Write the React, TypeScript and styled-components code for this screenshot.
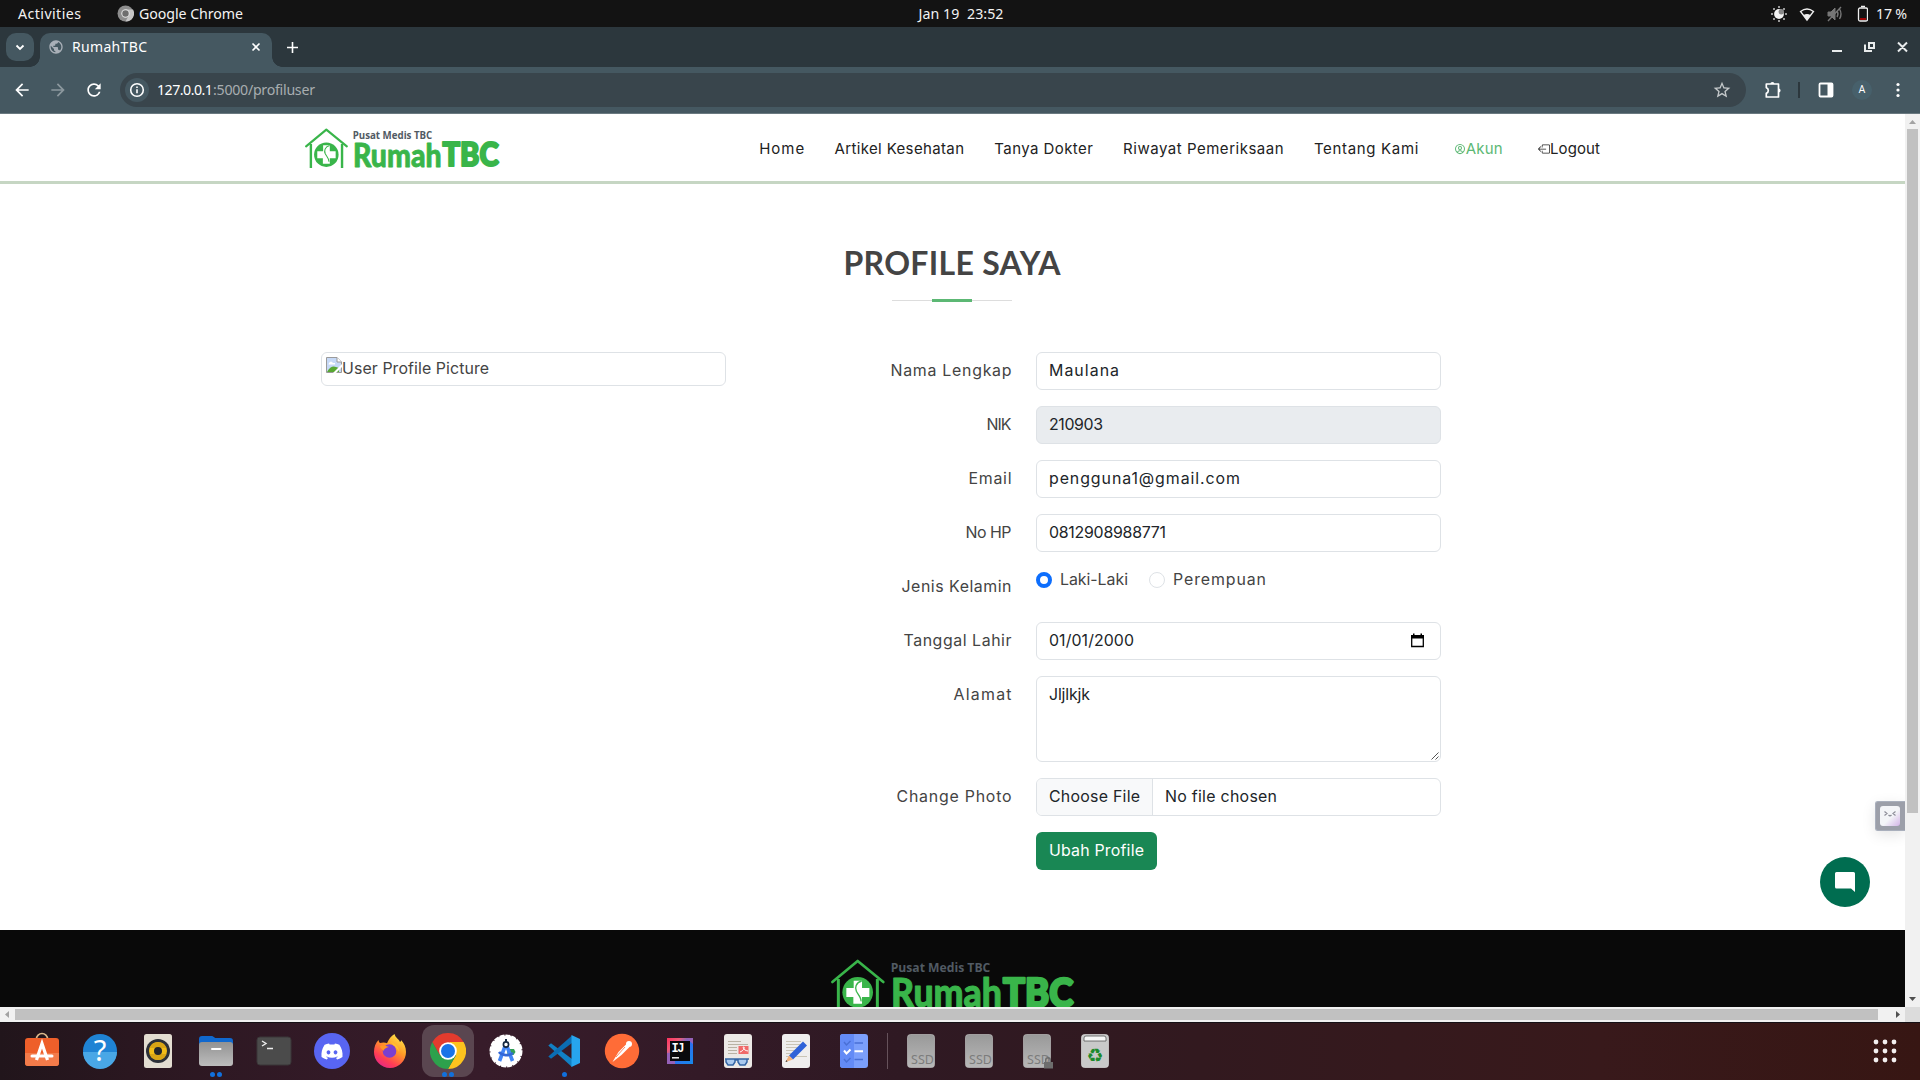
import React, { useLayoutEffect, useRef, useState } from "react";
import styled, { createGlobalStyle } from "styled-components";
import { FaDiscord } from "react-icons/fa";
import { BiUserCircle } from "react-icons/bi";
import { MdOutlineStarBorder, MdRefresh, MdArrowBack, MdArrowForward, MdPublic } from "react-icons/md";
import { BsBoxArrowLeft } from "react-icons/bs";

const Global = createGlobalStyle`
  * { box-sizing: border-box; }
  html, body { margin: 0; padding: 0; overflow: hidden; background: #fff; }
  svg { display: block; flex: none; }
`;

const ui = `"Noto Sans", "Open Sans", sans-serif`;
const body = `Inter, "Open Sans", sans-serif`;

/* Text tracked so that it fills a given width. */
const Tracked = styled.span<{ $w: number }>`
  display: inline-block;
  width: ${(p) => p.$w}px;
  white-space: pre;
  text-align: left;
  flex: none;
`;

function Fit({ w, children }: { w: number; children: string }) {
  const ref = useRef<HTMLSpanElement>(null);
  const [ls, setLs] = useState(0);
  useLayoutEffect(() => {
    const el = ref.current;
    if (!el) return;
    const natural = el.getBoundingClientRect().width;
    setLs((w - natural) / Math.max(1, children.length - 1));
  }, [w, children]);
  return (
    <Tracked $w={w}>
      <span ref={ref} style={{ letterSpacing: ls }}>{children}</span>
    </Tracked>
  );
}

const Screen = styled.div`
  width: 1920px;
  height: 1080px;
  display: flex;
  flex-direction: column;
  overflow: hidden;
  background: #fff;
`;

/* ---------- system bar ---------- */
const SystemBar = styled.header`
  height: 27px;
  flex: none;
  display: grid;
  grid-template-columns: 1fr auto 1fr;
  align-items: center;
  background: #131313;
  color: #f2f2f2;
  font: 14.2px/27px ${ui};
  padding: 0 13px 0 18px;
`;
const SystemSide = styled.div<{ $end?: boolean; $gap: number }>`
  display: flex;
  align-items: center;
  gap: ${(p) => p.$gap}px;
  justify-content: ${(p) => (p.$end ? "flex-end" : "flex-start")};
`;
const Clock = styled.div`
  padding-right: 3px;
`;
const AppMenu = styled.div`
  display: flex;
  align-items: center;
  gap: 5px;
`;

/* ---------- browser chrome ---------- */
const TabStrip = styled.div`
  height: 40px;
  flex: none;
  display: flex;
  align-items: flex-start;
  background: #2c373d;
  padding: 6px 12px 0 6px;
`;
const TabSearch = styled.div`
  width: 28px;
  height: 28px;
  border-radius: 10px;
  background: #455861;
  display: grid;
  place-items: center;
  margin-right: 6px;
`;
const Tab = styled.div`
  position: relative;
  width: 232px;
  height: 34px;
  border-radius: 10px 10px 0 0;
  background: #455861;
  color: #fff;
  display: flex;
  align-items: center;
  padding: 0 11px 6px 8px;
  font: 14px/28px ${ui};
  &::before,
  &::after {
    content: "";
    position: absolute;
    bottom: 0;
    width: 10px;
    height: 10px;
  }
  &::before {
    left: -10px;
    background: radial-gradient(circle at 0 0, transparent 9.5px, #455861 10px);
  }
  &::after {
    right: -10px;
    background: radial-gradient(circle at 100% 0, transparent 9.5px, #455861 10px);
  }
`;
const TabTitle = styled.div`
  flex: 1;
  padding-left: 8px;
`;
const NewTab = styled.div`
  height: 28px;
  display: grid;
  place-items: center;
  margin-left: 12px;
  width: 16px;
`;
const WindowButtons = styled.div`
  margin-left: auto;
  height: 28px;
`;
const Toolbar = styled.div`
  height: 47px;
  flex: none;
  display: flex;
  align-items: center;
  background: #455861;
  border-bottom: 1px solid #6a7980;
  padding: 0 12px 0 12px;
  color: #fff;
`;
const NavButtons = styled.div`
  display: flex;
  gap: 16px;
  width: 108px;
`;
const AddressBar = styled.div`
  width: 1626px;
  height: 34px;
  border-radius: 17px;
  background: #39454c;
  display: flex;
  align-items: center;
  padding: 0 14px 0 5px;
  font: 14.2px/34px ${ui};
`;
const InfoChip = styled.div`
  width: 24px;
  height: 24px;
  border-radius: 50%;
  background: #455861;
  display: grid;
  place-items: center;
  margin-right: 8px;
`;
const Path = styled.span`
  flex: 1;
  color: #a8adb0;
`;
const ToolbarActions = styled.div`
  display: flex;
  align-items: center;
  padding-left: 17px;
`;
const ToolbarRule = styled.div`
  width: 2px;
  height: 16px;
  background: #2c373d;
  margin: 0 18px 0 15px;
`;
const Avatar = styled.div`
  width: 20px;
  height: 20px;
  border-radius: 50%;
  background: #47606b;
  display: grid;
  place-items: center;
  font: 400 10.5px/20px Roboto, sans-serif;
  margin: 0 24px 0 18px;
`;

/* ---------- page frame ---------- */
const Frame = styled.div`
  height: 908px;
  flex: none;
  display: grid;
  grid-template-columns: 1905px 15px;
  grid-template-rows: 893px 15px;
`;
const Viewport = styled.main`
  position: relative;
  overflow: hidden;
  background: #fff;
  font: 15.9px/24px ${body};
  color: #444;
`;
const VScroll = styled.div`
  background: #f1f1f1;
  display: flex;
  flex-direction: column;
  align-items: center;
  justify-content: space-between;
`;
const VThumb = styled.div`
  width: 11px;
  height: 684px;
  background: #c1c1c1;
  margin-bottom: auto;
`;
const HScroll = styled.div`
  background: #f1f1f1;
  display: flex;
  align-items: center;
`;
const HThumb = styled.div`
  width: 1863px;
  height: 11px;
  background: #c1c1c1;
  margin-right: auto;
`;
const Corner = styled.div`
  background: #dcdcdc;
`;

/* ---------- site ---------- */
const SiteHeader = styled.div`
  height: 70px;
  border-bottom: 3px solid #c6d6c3;
  display: flex;
  padding: 0 305px;
`;
const BrandSlot = styled.div`
  width: 455px;
  padding-top: 14px;
`;
const SiteNav = styled.nav`
  display: flex;
  align-items: center;
  height: 69px;
  gap: 30.3px;
  color: #222;
  font-size: 15px;
`;
const NavItem = styled.div<{ $active?: boolean; $icon?: boolean }>`
  display: flex;
  align-items: center;
  color: ${(p) => (p.$active ? "#5cb874" : "#222")};
  margin-left: ${(p) => (p.$icon ? "5px" : "0")};
`;
const SectionTitle = styled.section`
  display: flex;
  flex-direction: column;
  align-items: center;
  height: 168px;
  padding: 60px 1px 0 0;
`;
const Heading = styled.h2`
  margin: 0;
  font: 700 32px/38px Lato, sans-serif;
  color: #444;
`;
const Underline = styled.div`
  width: 120px;
  height: 3px;
  margin-top: 17px;
  display: flex;
  align-items: center;
  justify-content: center;
  background: linear-gradient(#ddd, #ddd) 0 1px / 120px 1px no-repeat;
`;
const Accent = styled.div`
  width: 40px;
  height: 3px;
  background: #5cb874;
`;
const Content = styled.section`
  display: flex;
  height: 578px;
  padding-left: 321px;
`;
const PictureBox = styled.div`
  width: 405px;
  height: 34px;
  border: 1px solid #dee2e6;
  border-radius: 6px;
  padding: 4px;
  display: flex;
  line-height: 24px;
`;
const Form = styled.form`
  width: 715px;
  display: flex;
  flex-direction: column;
  gap: 16px;
`;
const Row = styled.div`
  display: grid;
  grid-template-columns: 286px 405px;
  column-gap: 24px;
`;
const Label = styled.label`
  text-align: right;
  padding: 7px 0.5px 0 0;
  line-height: 24px;
`;
const Field = styled.div<{ $disabled?: boolean; $h?: number }>`
  height: ${(p) => p.$h ?? 38}px;
  border: 1px solid #dee2e6;
  border-radius: 6px;
  background: ${(p) => (p.$disabled ? "#e9ecef" : "#fff")};
  color: #212529;
  padding: 6px 15px 0 12px;
  display: flex;
  justify-content: space-between;
  overflow: hidden;
`;
const FileField = styled(Field)`
  padding: 0;
  justify-content: flex-start;
`;
const FileButton = styled.div`
  width: 116px;
  height: 36px;
  padding: 6px 0 0 12px;
  background: #f8f9fa;
  border-right: 1px solid #dee2e6;
`;
const FileName = styled.div`
  padding: 6px 0 0 12px;
`;
const Grip = styled.div`
  align-self: flex-end;
  margin: 0 -14px 1px 0;
`;
const Calendar = styled.div`
  padding-top: 4px;
`;
const RadioGroup = styled.div`
  height: 38px;
  display: flex;
`;
const RadioItem = styled.div`
  display: flex;
  gap: 8px;
  height: 24px;
  align-items: center;
  margin-right: 21px;
`;
const Radio = styled.div<{ $on?: boolean }>`
  width: 16px;
  height: 16px;
  border-radius: 50%;
  border: ${(p) => (p.$on ? "4.5px solid #0d6efd" : "1px solid #dee2e6")};
  background: #fff;
`;
const Submit = styled.div`
  width: 121px;
  height: 38px;
  border-radius: 6px;
  background: #198754;
  color: #fff;
  padding: 7px 0 0 13px;
`;
const Footer = styled.footer`
  height: 77px;
  background: #090909;
  padding: 29px 0 0 831px;
  overflow: hidden;
`;
const ChatButton = styled.div`
  position: absolute;
  left: 1820px;
  top: 743px;
  width: 50px;
  height: 50px;
  border-radius: 50%;
  background: #006d50;
  display: grid;
  place-items: center;
`;
const SideWidget = styled.div`
  position: absolute;
  left: 1875px;
  top: 687px;
  width: 30px;
  height: 30px;
  border: 1px solid #a9afbc;
  border-right: 0;
  border-radius: 3px 0 0 3px;
  background: #9c9fa9;
  box-shadow: 0 4px 14px rgba(0, 0, 0, 0.1);
  padding: 4px;
`;
const SideFace = styled.div`
  width: 20px;
  height: 20px;
  border-radius: 3px;
  background: linear-gradient(135deg, #f4f5f8 55%, #d3b4e6);
`;

/* ---------- dock ---------- */
const Dock = styled.div`
  height: 58px;
  flex: none;
  border-top: 1px solid #151015;
  display: flex;
  padding: 0 6px 0 13px;
  background: linear-gradient(90deg, #21151b 0, #2a1720 130px, #331a27 330px, #371c2a 480px, #331a27 700px, #2f1923 900px, #32191f 1200px, #38191b 1600px, #371613 1920px);
`;
const DockItem = styled.div`
  width: 58px;
  height: 57px;
  display: flex;
  justify-content: center;
  padding-top: 2px;
  position: relative;
`;
const DockTile = styled.div<{ $active?: boolean }>`
  width: 52px;
  height: 52px;
  border-radius: 12px;
  background: ${(p) => (p.$active ? "#5a4650" : "transparent")};
  display: grid;
  place-items: center;
`;
const Running = styled.div`
  position: absolute;
  bottom: 3px;
  left: 0;
  width: 58px;
  display: flex;
  justify-content: center;
  gap: 2px;
`;
const Dot = styled.i`
  width: 5px;
  height: 5px;
  border-radius: 50%;
  background: #1170dd;
`;
const DockRule = styled.div`
  width: 1px;
  height: 36px;
  margin: 10px 4px 0;
  background: #66525b;
`;
const AppGrid = styled.div`
  margin-left: auto;
  width: 58px;
  height: 56px;
  display: grid;
  place-items: center;
`;

const LogoSvg = styled.svg`
  overflow: visible;
`;

/* House logo with wordmark; both the header and the footer scale it by width. */
function Logo({ width }: { width: number }) {
  const g = "#39b54a";
  return (
    <LogoSvg width={width} height={(width * 155) / 732} viewBox="152 118 732 155">
      <g fill="none" stroke={g} strokeLinecap="round" strokeLinejoin="round">
        <path d="M156 187 232 124 309 187" strokeWidth="8" />
        <path d="M174 178V268M291 178V268" strokeWidth="9" strokeLinecap="butt" />
      </g>
      <circle cx="232" cy="218" r="46" fill={g} />
      <path d="M220 183h25v22h22v27h-22v20h-26v-20h-21v-27h22z" fill="#fff" />
      <path d="M244 184c-18 5-21 20-16 31 5 10 15 18 14 30" fill="none" stroke={g} strokeWidth="4" />
      <text x="331" y="158" fontFamily='"Open Sans", sans-serif' fontWeight="700" fontSize="39" fill="#515a63" textLength="299" lengthAdjust="spacingAndGlyphs">Pusat Medis TBC</text>
      <g fill={g} stroke={g} strokeLinejoin="round" fontFamily="Lato, sans-serif" fontWeight="900">
        <text x="332" y="263" fontSize="122" strokeWidth="3" textLength="333" lengthAdjust="spacingAndGlyphs">Rumah</text>
        <text x="668" y="262" fontSize="122" strokeWidth="8" textLength="211" lengthAdjust="spacingAndGlyphs">TBC</text>
      </g>
    </LogoSvg>
  );
}

const Store = () => (
  <svg width="36" height="38" viewBox="0 0 36 38">
    <path d="M12.500 9V7a5.500 5.500 0 0 1 11 0v2" fill="none" stroke="#dcb98c" strokeWidth="1.600" />
    <rect x="1" y="6" width="34" height="28" rx="3" fill="#ee5f2a" />
    <path d="M1 21h34v10a3 3 0 0 1-3 3H4a3 3 0 0 1-3-3z" fill="#f37b4a" />
    <path d="M12.500 28 18 11.500 23.500 28" fill="none" stroke="#fff" strokeWidth="3.200" />
    <path d="M8 24h20" stroke="#fff" strokeWidth="3" strokeLinecap="round" />
  </svg>
);
const Help = () => (
  <svg width="36" height="36" viewBox="0 0 36 36">
    <circle cx="18" cy="18" r="17" fill="#1f83d4" />
    <path d="M1 19a17 17 0 0 0 34 0z" fill="#49a7e6" />
    <text x="18" y="28" textAnchor="middle" fontFamily='"Noto Sans"' fontSize="29" fill="#fff">?</text>
  </svg>
);
const Music = () => (
  <svg width="36" height="36" viewBox="0 0 36 36">
    <rect x="4" y="1" width="28" height="34" rx="2.500" fill="#e3ddd1" />
    <circle cx="18" cy="18" r="12" fill="#2c3038" />
    <circle cx="18" cy="18" r="9" fill="#f2bd18" />
    <path d="M9.500 15a9 9 0 0 1 17 0zM9.500 21a9 9 0 0 0 17 0z" fill="#d9a515" />
    <circle cx="18" cy="18" r="4" fill="#23262c" />
  </svg>
);
const Files = () => (
  <svg width="36" height="36" viewBox="0 0 36 36">
    <path d="M1 6a3 3 0 0 1 3-3h9c3 0 3 2 5 2h14a3 3 0 0 1 3 3v8H1z" fill="#1068ce" />
    <defs><linearGradient id="fo" x2="0" y2="1"><stop stopColor="#929292" /><stop offset="1" stopColor="#bdbdbd" /></linearGradient></defs>
    <path d="M1 12a3 3 0 0 1 3-3h28a3 3 0 0 1 3 3v18a3 3 0 0 1-3 3H4a3 3 0 0 1-3-3z" fill="url(#fo)" />
    <path d="M14 16h8.500" stroke="#fff" strokeWidth="2" strokeLinecap="round" />
  </svg>
);
const Term = () => (
  <svg width="36" height="36" viewBox="0 0 36 36">
    <rect x="1" y="4" width="34" height="28" rx="3" fill="#4b4b4b" stroke="#3a3638" />
    <path d="m6 8 4 2.500L6 13M11 15.500h6" fill="none" stroke="#eee" strokeWidth="1.400" />
  </svg>
);
const Discord = () => (
  <svg width="36" height="36" viewBox="0 0 36 36">
    <circle cx="18" cy="18" r="18" fill="#5865f2" />
    <FaDiscord x="6.500" y="7" size="23" color="#fff" />
  </svg>
);
const Firefox = () => (
  <svg width="36" height="36" viewBox="0 0 36 36">
    <defs>
      <linearGradient id="fx" x1=".8" y1="0" x2=".2" y2="1"><stop stopColor="#ffe94a" /><stop offset=".4" stopColor="#ff9a26" /><stop offset=".75" stopColor="#ff3d55" /><stop offset="1" stopColor="#e2258d" /></linearGradient>
    </defs>
    <path d="M22.500 1c1 4 4 4.500 5.500 8 1-.5 1.200-1.500 1-2 3 3 5 7 5 12A16 16 0 0 1 2 19c0-5 1.500-9 4.500-12 .2 1.500.8 2.500 1.500 3 2.500-.8 5-.8 7 .2C17 6 19 3 22.500 1z" fill="url(#fx)" />
    <circle cx="17.500" cy="18" r="6.800" fill="#7b3fd0" />
    <path d="M8 13c4-1 6 0 9 1-3 .5-5 2-5.500 4-1-2-3-2-3.500-5z" fill="#ff9527" />
    <path d="M19 9c5 2 8 5 8 10-2-5-5-5-8-10z" fill="#ffbf33" />
  </svg>
);
const Chrome = () => (
  <svg width="36" height="36" viewBox="0 0 36 36">
    <path d="M18 18 2.410 9A18 18 0 0 1 33.590 9z" fill="#e33b2e" />
    <path d="M18 9H33.590A18 18 0 0 1 18 36L25.800 22.500z" fill="#fcc31e" />
    <path d="M2.410 9A18 18 0 0 0 18 36L25.800 22.500 18 18 10.200 22.500z" fill="#2da14c" />
    <path d="M2.410 9H20l-8 12-1.800 1.500z" fill="#e33b2e" />
    <circle cx="18" cy="18" r="8.800" fill="#fff" />
    <circle cx="18" cy="18" r="7" fill="#1a73e8" />
  </svg>
);
const Studio = () => (
  <svg width="36" height="36" viewBox="0 0 36 36">
    <circle cx="18" cy="18" r="15.500" fill="#fff" stroke="#fff" strokeWidth="2" strokeDasharray="5 1" />
    <path d="M19 16h7l1.500 3-2 3h-6z" fill="#34a055" />
    <path d="m17.500 12-6 16M18.500 12l6 16" stroke="#4285f4" strokeWidth="3.600" />
    <path d="M11 19c3 4 10 4 14 1" fill="none" stroke="#3367d6" strokeWidth="2.600" />
    <circle cx="18" cy="11.500" r="2.600" fill="#fff" stroke="#152840" strokeWidth="1.700" />
    <path d="M18 6v3" stroke="#152840" strokeWidth="2" />
  </svg>
);
const Code = () => (
  <svg width="36" height="36" viewBox="0 0 36 36">
    <path d="M2.300 12.500 5 10.300 26 26v8z" fill="#1180c4" />
    <path d="M2.300 23.500 5 25.700 26 10V2.500z" fill="#0b6db3" />
    <path d="M25.500 2 34 6v24l-8.500 4z" fill="#27a5ee" />
  </svg>
);
const Postman = () => (
  <svg width="36" height="36" viewBox="0 0 36 36">
    <circle cx="18" cy="18" r="17.200" fill="#ff6c37" />
    <path d="m22.500 11 3 3-8 8-9 7 6-10z" fill="#fff" />
    <path d="M24 17.500 15 27M21 14l-9 10" stroke="#ff6c37" strokeWidth=".8" />
    <circle cx="25" cy="11" r="3" fill="#fff" />
  </svg>
);
const Idea = () => (
  <svg width="36" height="36" viewBox="0 0 36 36">
    <defs><linearGradient id="ij" y2="1"><stop stopColor="#fe315d" /><stop offset=".25" stopColor="#f05a78" /><stop offset=".55" stopColor="#2d6ff0" /><stop offset="1" stopColor="#1689e8" /></linearGradient></defs>
    <path d="M5 5h26v26H5z" fill="url(#ij)" />
    <path d="M5 20h8v11H5zM24 5h7v6z" fill="#9561b8" />
    <path d="M8 8h20v20H8z" fill="#0a0a0c" />
    <text x="9.500" y="19" fontFamily='"Liberation Mono"' fontWeight="700" fontSize="12" fill="#fff" textLength="13">IJ</text>
    <path d="M10 24.800h7" stroke="#fff" strokeWidth="1.400" />
  </svg>
);
const Reader = () => (
  <svg width="36" height="36" viewBox="0 0 36 36">
    <rect x="4" y="1" width="28" height="34" rx="3" fill="#ece9e6" />
    <path d="M8 8.500h13M8 11.500h20M8 14.500h9M8 17.500h9M8 20.500h9" stroke="#b9b2a4" strokeWidth="1.200" />
    <rect x="18.500" y="13" width="10" height="8" fill="#f06a6a" />
    <path d="M20 19c3-1 5-4 4-5s-2 3 4 4" fill="none" stroke="#fff" />
    <g fill="#a9c9ee" stroke="#3465a4" strokeWidth="1.500"><path d="M6 26h9v3l-2 3H8l-2-3zM18 26h9v3l-2 3h-5l-2-3zM15 27h3M5 26h24" /></g>
  </svg>
);
const Editor = () => (
  <svg width="36" height="36" viewBox="0 0 36 36">
    <rect x="4" y="1" width="28" height="34" rx="3" fill="#efeeee" />
    <path d="M8 8.500h15M8 11.500h15M8 14.500h13M8 17.500h10M8 20.500h9M8 23.500h21" stroke="#c9c4b6" strokeWidth="1.200" />
    <path d="m25 8.500 4 4L15 26.500l-4-4z" fill="#2f62d8" />
    <path d="m11 22.500 4 4L7.500 29z" fill="#f3b27c" />
    <path d="m8.500 27-1 2 2-.6z" fill="#333" />
  </svg>
);
const Tasks = () => (
  <svg width="36" height="36" viewBox="0 0 36 36">
    <rect x="4" y="1" width="28" height="34" rx="3" fill="#7b9ffb" />
    <path d="M7 1h11v34H7a3 3 0 0 1-3-3V4a3 3 0 0 1 3-3z" fill="#638bf6" />
    <path d="m8 9 2.500 3 4-4M8 26l2.500 3 4-4M18.500 10h8.500M18.500 26.500h8.500" fill="none" stroke="#4a70d6" strokeWidth="1.500" />
    <path d="m8 17.500 2.500 3 4-4M18.500 18.300h8.500" fill="none" stroke="#fff" strokeWidth="2" />
  </svg>
);
const Ssd = ({ locked }: { locked?: boolean }) => (
  <svg width="36" height="36" viewBox="0 0 36 36">
    <defs><linearGradient id="sd" x2="0" y2="1"><stop stopColor="#999" /><stop offset="1" stopColor="#b8b8b8" /></linearGradient></defs>
    <rect x="4.500" y="1.500" width="27" height="33" rx="3" fill="url(#sd)" stroke="#bcbcbc" strokeWidth=".7" />
    <text x="8" y="31" fontFamily='"Noto Sans"' fontSize="12.500" fill="#7c7c7c" textLength="23">SSD</text>
    {locked && <path d="M26 29v-2a3 3 0 0 1 6 0v2h2v6.500h-9V29zM27.500 29h3v-2a1.500 1.500 0 0 0-3 0z" fill="#6d6d6d" fillRule="evenodd" />}
  </svg>
);
const Trash = () => (
  <svg width="36" height="36" viewBox="0 0 36 36">
    <rect x="4.500" y="1.500" width="27" height="33" rx="3" fill="#c9c9c9" stroke="#ddd" strokeWidth=".7" />
    <path d="M7 8V5q0-2 2-2h18q2 0 2 2v3z" fill="#f7f7f7" stroke="#555" strokeWidth=".8" />
    <text x="18" y="28.500" textAnchor="middle" fontFamily='"DejaVu Sans"' fontSize="19" fill="#1d8a2c">♻</text>
  </svg>
);

const dock: { icon: React.ReactNode; dots?: number; active?: boolean }[] = [
  { icon: <Store /> },
  { icon: <Help /> },
  { icon: <Music /> },
  { icon: <Files />, dots: 2 },
  { icon: <Term /> },
  { icon: <Discord /> },
  { icon: <Firefox /> },
  { icon: <Chrome />, dots: 2, active: true },
  { icon: <Studio /> },
  { icon: <Code />, dots: 1 },
  { icon: <Postman /> },
  { icon: <Idea /> },
  { icon: <Reader /> },
  { icon: <Editor /> },
  { icon: <Tasks /> },
];
const drives: React.ReactNode[] = [<Ssd />, <Ssd />, <Ssd locked />, <Trash />];

const nav: [string, number][] = [
  ["Home", 45],
  ["Artikel Kesehatan", 129.5],
  ["Tanya Dokter", 98.5],
  ["Riwayat Pemeriksaan", 160.5],
  ["Tentang Kami", 104.5],
];

function TextRow({ label, lw, value, vw, disabled }: { label: string; lw: number; value: string; vw: number; disabled?: boolean }) {
  return (
    <Row>
      <Label><Fit w={lw}>{label}</Fit></Label>
      <Field $disabled={disabled}><Fit w={vw}>{value}</Fit></Field>
    </Row>
  );
}

export default function App() {
  return (
    <Screen>
      <Global />
      <SystemBar>
        <SystemSide $gap={36}>
          <Fit w={63}>Activities</Fit>
          <AppMenu>
            <svg width="17" height="17" viewBox="0 0 17 17">
              <circle cx="8.500" cy="8.500" r="8" fill="#8d8d8d" />
              <path d="M8.500 4.500H16A8 8 0 0 1 8.500 16.500L12 10z" fill="#c6c6c6" />
              <circle cx="8.500" cy="8.500" r="4.200" fill="#e5e5e5" />
              <circle cx="8.500" cy="8.500" r="3.200" fill="#6e6e6e" />
            </svg>
            <Fit w={104}>Google Chrome</Fit>
          </AppMenu>
        </SystemSide>
        <Clock><Fit w={85}>Jan 19  23:52</Fit></Clock>
        <SystemSide $end $gap={8}>
          <svg width="97" height="18" viewBox="0 0 97 18">
            <g fill="#999"><path d="M7 1h2v2H7zM7 15h2v2H7zM0 8h2v2H0zM14 8h2v2h-2zM2 3h2v2H2zM12 3h2v2h-2zM2 13h2v2H2zM12 13h2v2h-2z" /></g>
            <circle cx="8" cy="9" r="4.900" fill="#f2f2f2" />
            <circle cx="10.300" cy="6.800" r="2.700" fill="#888" />
            <path d="M29.500 6.500q6.500-5 13 0L36 15z" fill="none" stroke="#eee" strokeWidth="1.400" />
            <path d="M32.500 10q3.500-2 7 0L36 15z" fill="#eee" />
            <g fill="#777" stroke="#777"><path d="M57 7h3l4-4v12l-4-4h-3z" /><path d="M57 16 70 2M66 6q2 3 0 6M68.500 4q3 5 0 10" fill="none" strokeWidth="1.400" /></g>
            <rect x="87.500" y="3" width="9" height="13" rx="1.500" fill="none" stroke="#eee" strokeWidth="1.300" />
            <path d="M90 1.500h4" stroke="#eee" strokeWidth="1.500" />
            <path d="M89 14h6" stroke="#c00" strokeWidth="1.500" />
          </svg>
          <Fit w={31}>17 %</Fit>
        </SystemSide>
      </SystemBar>

      <TabStrip>
        <TabSearch>
          <svg width="10" height="7" viewBox="0 0 10 7"><path d="m1.500 1.500 3.500 3.500L8.500 1.500" fill="none" stroke="#fff" strokeWidth="1.800" /></svg>
        </TabSearch>
        <Tab>
          <MdPublic size={16} color="#a9b0b8" />
          <TabTitle><Fit w={75}>RumahTBC</Fit></TabTitle>
          <svg width="10" height="10" viewBox="0 0 10 10"><path d="m1.500 1.500 7 7M8.500 1.500l-7 7" stroke="#fff" strokeWidth="1.600" /></svg>
        </Tab>
        <NewTab>
          <svg width="11" height="11" viewBox="0 0 11 11"><path d="M5.500 0v11M0 5.500h11" stroke="#fff" strokeWidth="1.600" /></svg>
        </NewTab>
        <WindowButtons>
          <svg width="76" height="28" viewBox="0 0 76 28" fill="none" stroke="#e8ebec" strokeWidth="2">
            <path d="M0 18h10M37 10h5v5h-5zM33 11.500V18h7M66 9.500l9 9M75 9.500l-9 9" />
          </svg>
        </WindowButtons>
      </TabStrip>

      <Toolbar>
        <NavButtons>
          <MdArrowBack size={20} />
          <MdArrowForward size={20} color="#8c989e" />
          <MdRefresh size={20} />
        </NavButtons>
        <AddressBar>
          <InfoChip>
            <svg width="16" height="16" viewBox="0 0 16 16" fill="none" stroke="#fff" strokeWidth="1.600"><circle cx="8" cy="8" r="6.300" /><path d="M8 7.200v4M8 4.500v1.600" /></svg>
          </InfoChip>
          <Fit w={56}>127.0.0.1</Fit>
          <Path><Fit w={102}>:5000/profiluser</Fit></Path>
          <MdOutlineStarBorder size={20} color="#c4c8ca" />
        </AddressBar>
        <ToolbarActions>
          <svg width="20" height="20" viewBox="0 0 20 20">
            <path d="M3.300 4h12.200v5.700V17H3.300v-3.600q2-.7 2-2.900t-2-2.900z" fill="none" stroke="#fff" strokeWidth="1.700" strokeLinejoin="round" />
            <path d="M7.300 4a2.100 2.100 0 0 1 4.200 0zM15.500 8.400a2.100 2.100 0 0 1 0 4.200z" fill="#fff" />
          </svg>
          <ToolbarRule />
          <svg width="16" height="16" viewBox="0 0 16 16"><rect x="1.500" y="1.500" width="13" height="13" rx="1" fill="none" stroke="#fff" strokeWidth="1.800" /><path d="M9.500 1h5v14h-5z" fill="#fff" /></svg>
          <Avatar>A</Avatar>
          <svg width="4" height="16" viewBox="0 0 4 16" fill="#fff"><circle cx="2" cy="2.500" r="1.600" /><circle cx="2" cy="8" r="1.600" /><circle cx="2" cy="13.500" r="1.600" /></svg>
        </ToolbarActions>
      </Toolbar>

      <Frame>
        <Viewport>
          <SiteHeader>
            <BrandSlot><Logo width={195} /></BrandSlot>
            <SiteNav>
              {nav.map(([t, w]) => <NavItem key={t}><Fit w={w}>{t}</Fit></NavItem>)}
              <NavItem $active $icon><BiUserCircle size={12} /><Fit w={37}>Akun</Fit></NavItem>
              <NavItem $icon><BsBoxArrowLeft size={12} /><Fit w={50}>Logout</Fit></NavItem>
            </SiteNav>
          </SiteHeader>
          <SectionTitle>
            <Heading><Fit w={217}>PROFILE SAYA</Fit></Heading>
            <Underline><Accent /></Underline>
          </SectionTitle>
          <Content>
            <PictureBox>
              <svg width="16" height="16" viewBox="0 0 16 16">
                <path d="M.5.5h10.500l4.500 4.500v10.500H.5z" fill="#c6d9f7" stroke="#9a9a9a" />
                <path d="M3 6q2-3 4 0h2v1.500H2.500z" fill="#fff" />
                <path d="M1 15q4-7 9-5l3 1v4z" fill="#58a832" />
                <path d="M11 .5v4.500h4.500" fill="#fff" stroke="#9a9a9a" />
                <path d="M17 6 7 16h3l7-7z" fill="#fff" />
              </svg>
              <Fit w={147}>User Profile Picture</Fit>
            </PictureBox>
            <Form>
              <TextRow label="Nama Lengkap" lw={121} value="Maulana" vw={70} />
              <TextRow label="NIK" lw={25} value="210903" vw={54} disabled />
              <TextRow label="Email" lw={43} value="pengguna1@gmail.com" vw={191} />
              <TextRow label="No HP" lw={46} value="0812908988771" vw={117} />
              <Row>
                <Label><Fit w={110}>Jenis Kelamin</Fit></Label>
                <RadioGroup>
                  <RadioItem><Radio $on /><Fit w={68}>Laki-Laki</Fit></RadioItem>
                  <RadioItem><Radio /><Fit w={93}>Perempuan</Fit></RadioItem>
                </RadioGroup>
              </Row>
              <Row>
                <Label><Fit w={108}>Tanggal Lahir</Fit></Label>
                <Field>
                  <Fit w={85}>01/01/2000</Fit>
                  <Calendar>
                    <svg width="15" height="15" viewBox="0 0 15 15"><path d="M1.700 3.500h11.600v10H1.700z" fill="none" stroke="#000" strokeWidth="1.300" /><path d="M1 2h13v3.500H1zM3 .5h1.500V2H3zM10.500.5H12V2h-1.500z" /></svg>
                  </Calendar>
                </Field>
              </Row>
              <Row>
                <Label><Fit w={58}>Alamat</Fit></Label>
                <Field $h={86}>
                  <Fit w={41}>Jljlkjk</Fit>
                  <Grip><svg width="8" height="8" viewBox="0 0 8 8"><path d="m.5 7.500 7-7M4.500 7.500l3-3" stroke="#555" /></svg></Grip>
                </Field>
              </Row>
              <Row>
                <Label><Fit w={115}>Change Photo</Fit></Label>
                <FileField as="div">
                  <FileButton><Fit w={91}>Choose File</Fit></FileButton>
                  <FileName><Fit w={112}>No file chosen</Fit></FileName>
                </FileField>
              </Row>
              <Row>
                <span />
                <Submit><Fit w={95}>Ubah Profile</Fit></Submit>
              </Row>
            </Form>
          </Content>
          <Footer><Logo width={244} /></Footer>
          <ChatButton>
            <svg width="20" height="20" viewBox="0 0 20 20"><path d="M1.500 0h17Q20 0 20 1.500V20l-4-3.500H1.500Q0 16.500 0 15V1.500Q0 0 1.500 0z" fill="#fff" /></svg>
          </ChatButton>
          <SideWidget>
            <SideFace>
              <svg width="20" height="20" viewBox="0 0 20 20" fill="none" stroke="#8e8e99" strokeWidth="1.200"><path d="m4.500 5.500 2.500 2-2.500 2M15.500 5.500l-2.500 2 2.500 2M8.500 9q1.500 1.500 3 0" /></svg>
            </SideFace>
          </SideWidget>
        </Viewport>
        <VScroll>
          <svg width="15" height="15" viewBox="0 0 15 15"><path d="m4 10 3.500-4L11 10z" fill="#a3a3a3" /></svg>
          <VThumb />
          <svg width="15" height="15" viewBox="0 0 15 15"><path d="m4 5 3.500 4L11 5z" fill="#505050" /></svg>
        </VScroll>
        <HScroll>
          <svg width="15" height="15" viewBox="0 0 15 15"><path d="M9 4 5 7.500 9 11z" fill="#a3a3a3" /></svg>
          <HThumb />
          <svg width="15" height="15" viewBox="0 0 15 15"><path d="m6 4 4 3.500L6 11z" fill="#505050" /></svg>
        </HScroll>
        <Corner />
      </Frame>

      <Dock>
        {dock.map((d, i) => (
          <DockItem key={i}>
            <DockTile $active={d.active}>{d.icon}</DockTile>
            {d.dots && <Running>{Array.from({ length: d.dots }, (_, k) => <Dot key={k} />)}</Running>}
          </DockItem>
        ))}
        <DockRule />
        {drives.map((d, i) => <DockItem key={i}><DockTile>{d}</DockTile></DockItem>)}
        <AppGrid>
          <svg width="24" height="24" viewBox="0 0 24 24" fill="#f3f0f0">
            {[3, 12, 21].map((y) => [3, 12, 21].map((x) => <circle key={`${x}-${y}`} cx={x} cy={y} r="2.400" />))}
          </svg>
        </AppGrid>
      </Dock>
    </Screen>
  );
}
